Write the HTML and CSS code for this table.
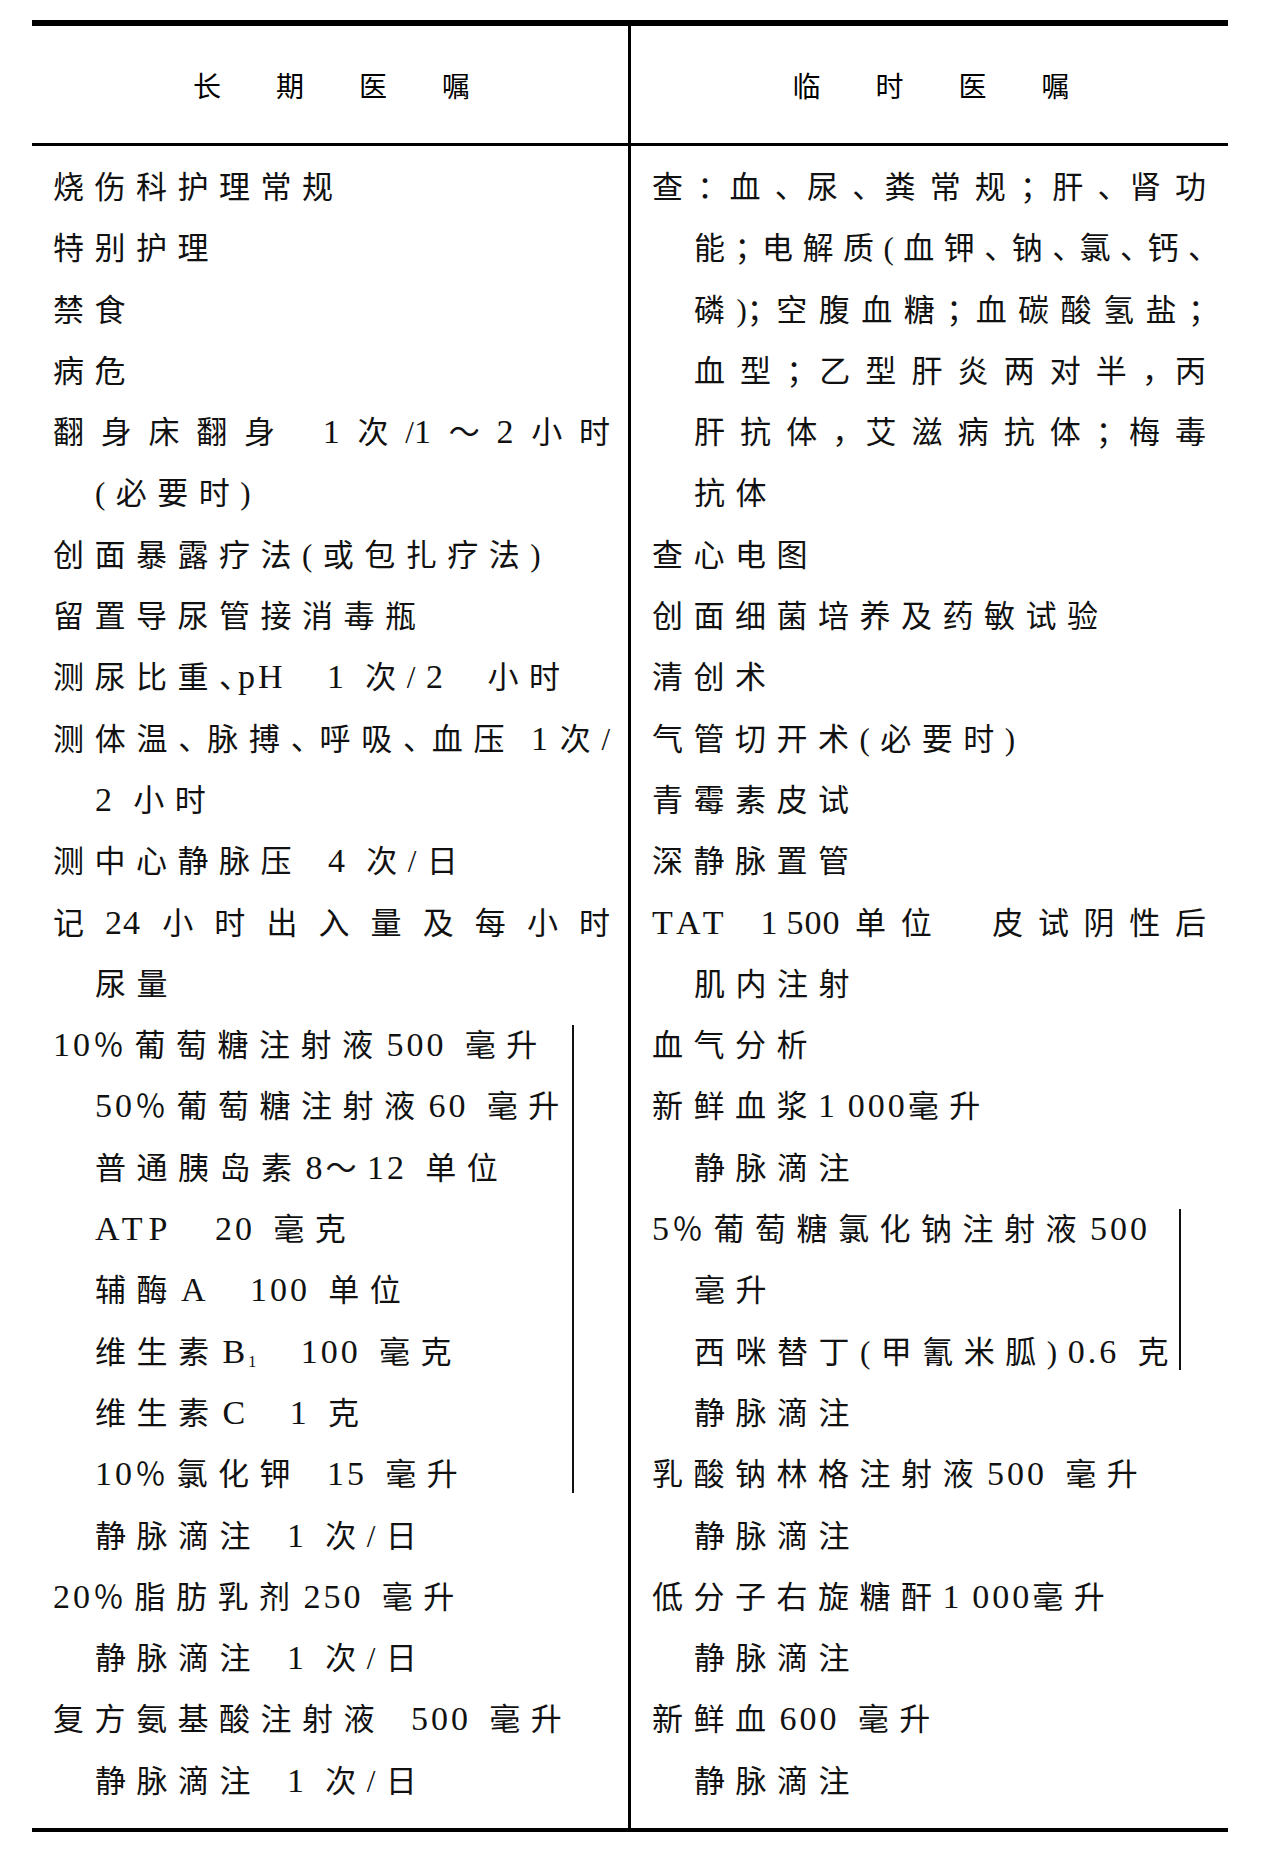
FILE: index.html
```html
<!DOCTYPE html>
<html lang="zh-CN">
<head>
<meta charset="utf-8">
<title>医嘱</title>
<link rel="stylesheet" href="styles.css">
</head>
<body>
<div class="sheet">
  <div class="head">
    <div class="hcell hleft">长期医嘱</div>
    <div class="hcell">临时医嘱</div>
  </div>
  <div class="body">
    <div class="col cleft">
      <div class="ln">烧伤科护理常规</div>
      <div class="ln">特别护理</div>
      <div class="ln">禁食</div>
      <div class="ln">病危</div>
      <div class="ln j">翻身床翻身&emsp;<span class="l">1</span>次/<span class="l">1</span>～<span class="l">2</span>小时</div>
      <div class="ln c">(必要时)</div>
      <div class="ln">创面暴露疗法(或包扎疗法)</div>
      <div class="ln">留置导尿管接消毒瓶</div>
      <div class="ln">测尿比重<span class="p">、</span><span class="l">pH</span>&emsp;<span class="l">1</span> 次/<span class="l">2</span>&emsp;小时</div>
      <div class="ln j">测体温<span class="p">、</span>脉搏<span class="p">、</span>呼吸<span class="p">、</span>血压&ensp;<span class="l">1</span>次/</div>
      <div class="ln c"><span class="l">2</span> 小时</div>
      <div class="ln">测中心静脉压&ensp;<span class="l">4</span> 次/日</div>
      <div class="ln j">记<span class="l">24</span>小时出入量及每小时</div>
      <div class="ln c">尿量</div>
      <div class="grp gl">
        <div class="ln"><span class="l">10</span>％葡萄糖注射液<span class="l s">500</span> 毫升</div>
        <div class="ln c"><span class="l">50</span>％葡萄糖注射液<span class="l s">60</span> 毫升</div>
        <div class="ln c">普通胰岛素<span class="l s">8</span>～<span class="l">12</span> 单位</div>
        <div class="ln c"><span class="l w">ATP</span>&emsp;<span class="l">20</span> 毫克</div>
        <div class="ln c">辅酶<span class="l s">A</span>&emsp;<span class="l">100</span> 单位</div>
        <div class="ln c">维生素<span class="l s">B<sub>1</sub></span>&emsp;<span class="l">100</span> 毫克</div>
        <div class="ln c">维生素<span class="l s">C</span>&emsp;<span class="l">1</span> 克</div>
        <div class="ln c"><span class="l">10</span>％氯化钾&ensp;<span class="l">15</span> 毫升</div>
      </div>
      <div class="ln c">静脉滴注&ensp;<span class="l">1</span> 次/日</div>
      <div class="ln"><span class="l">20</span>％脂肪乳剂<span class="l s">250</span> 毫升</div>
      <div class="ln c">静脉滴注&ensp;<span class="l">1</span> 次/日</div>
      <div class="ln">复方氨基酸注射液&ensp;<span class="l">500</span> 毫升</div>
      <div class="ln c">静脉滴注&ensp;<span class="l">1</span> 次/日</div>
    </div>
    <div class="col cright">
      <div class="ln j">查<span class="p">：</span>血<span class="p">、</span>尿<span class="p">、</span>粪常规<span class="p">；</span>肝<span class="p">、</span>肾功</div>
      <div class="ln c j">能<span class="p">；</span>电解质(血钾<span class="p">、</span>钠<span class="p">、</span>氯<span class="p">、</span>钙<span class="p">、</span></div>
      <div class="ln c j">磷)<span class="p">；</span>空腹血糖<span class="p">；</span>血碳酸氢盐<span class="p">；</span></div>
      <div class="ln c j">血型<span class="p">；</span>乙型肝炎两对半<span class="p">，</span>丙</div>
      <div class="ln c j">肝抗体<span class="p">，</span>艾滋病抗体<span class="p">；</span>梅毒</div>
      <div class="ln c">抗体</div>
      <div class="ln">查心电图</div>
      <div class="ln">创面细菌培养及药敏试验</div>
      <div class="ln">清创术</div>
      <div class="ln">气管切开术(必要时)</div>
      <div class="ln">青霉素皮试</div>
      <div class="ln">深静脉置管</div>
      <div class="ln j"><span class="l w">TAT</span>&emsp;<span class="l">1&thinsp;500</span>单位&emsp;皮试阴性后</div>
      <div class="ln c">肌内注射</div>
      <div class="ln">血气分析</div>
      <div class="ln">新鲜血浆<span class="l">1&thinsp;000</span>毫升</div>
      <div class="ln c">静脉滴注</div>
      <div class="grp gr">
        <div class="ln"><span class="l">5</span>％葡萄糖氯化钠注射液<span class="l s">500</span></div>
        <div class="ln c">毫升</div>
        <div class="ln c">西咪替丁(甲氰米胍)<span class="l">0.6</span> 克</div>
      </div>
      <div class="ln c">静脉滴注</div>
      <div class="ln">乳酸钠林格注射液<span class="l s">500</span> 毫升</div>
      <div class="ln c">静脉滴注</div>
      <div class="ln">低分子右旋糖酐<span class="l">1&thinsp;000</span>毫升</div>
      <div class="ln c">静脉滴注</div>
      <div class="ln">新鲜血<span class="l s">600</span> 毫升</div>
      <div class="ln c">静脉滴注</div>
    </div>
  </div>
</div>
</body>
</html>
```
FILE: styles.css
```css
* {
  box-sizing: border-box;
}

body {
  margin: 0;
  background: #ffffff;
  color: #000000;
}

.sheet {
  margin: 20px 0 0 32px;
  width: 1196px;
  border-top: 6px solid #000;
  border-bottom: 4px solid #000;
  font-family: "Liberation Serif", "Noto Sans CJK SC", serif;
}

.head {
  display: grid;
  grid-template-columns: 599px 597px;
  height: 120px;
  border-bottom: 3px solid #000;
}

.hcell {
  display: flex;
  align-items: center;
  justify-content: center;
  font-family: "Noto Sans CJK SC", sans-serif;
  font-size: 28px;
  letter-spacing: 55px;
  padding-left: 58px;
}

.hleft {
  border-right: 3px solid #000;
}

.body {
  display: grid;
  grid-template-columns: 599px 597px;
}

.col {
  padding: 11px 22px 16px 21px;
  font-size: 31px;
  line-height: 61.3px;
  letter-spacing: 10.5px;
  color: #111;
}

.cleft {
  border-right: 3px solid #000;
  padding-right: 18px;
}

.ln {
  height: 61.3px;
}

.c {
  padding-left: 42px;
}

.j {
  text-align: justify;
  text-align-last: justify;
  letter-spacing: 0;
}

.l {
  font-family: "Liberation Serif", serif;
  font-size: 34px;
  line-height: 1;
  letter-spacing: 3px;
}

.l.s {
  margin-left: 3px;
}

.j .l {
  letter-spacing: 1px;
}

.l.w,
.j .l.w {
  letter-spacing: 6px;
}

.l sub {
  font-size: 16px;
  vertical-align: -4px;
  line-height: 0;
}

.p {
  letter-spacing: -12px;
}

.j .p {
  letter-spacing: -13px;
}

.grp {
  position: relative;
}

.grp::after {
  content: "";
  position: absolute;
  top: 10px;
  bottom: 13px;
  width: 2px;
  background: #111;
}

.gl::after {
  left: 519px;
}

.gr::after {
  left: 527px;
}
```
